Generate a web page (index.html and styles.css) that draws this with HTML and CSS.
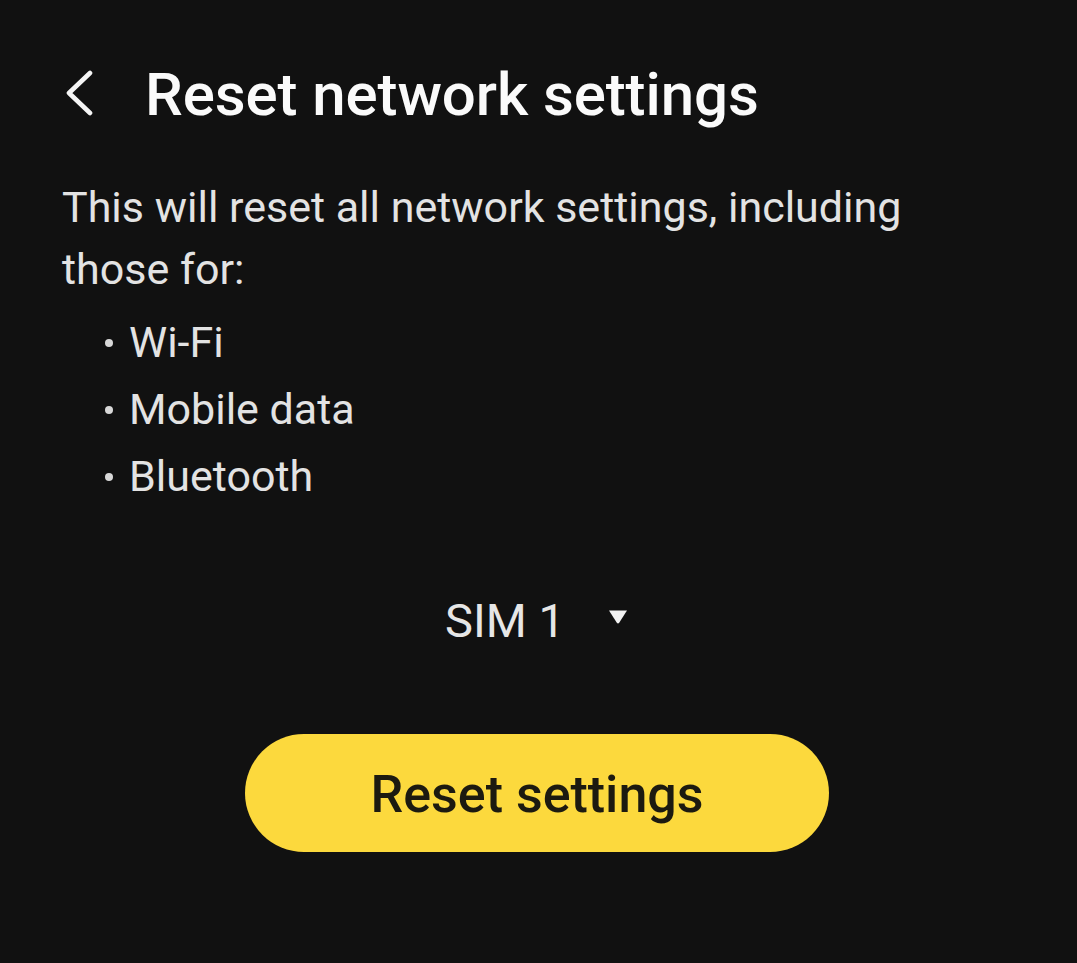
FILE: index.html
```html
<!DOCTYPE html>
<html lang="en">
<head>
<meta charset="utf-8">
<title>Reset network settings</title>
<link rel="stylesheet" href="styles.css">
</head>
<body>
<div class="screen">
  <header class="appbar">
    <button class="back" aria-label="Back">
      <svg width="30" height="46" viewBox="0 0 30 46"><path d="M26 3 L5 23 L26 43" fill="none" stroke="#f5f5f5" stroke-width="4.6" stroke-linecap="round" stroke-linejoin="round"/></svg>
    </button>
    <h1 class="title">Reset network settings</h1>
  </header>
  <section class="content">
    <p class="desc">This will reset all network settings, including those for:</p>
    <ul class="list">
      <li>Wi-Fi</li>
      <li>Mobile data</li>
      <li>Bluetooth</li>
    </ul>
    <div class="sim">
      <span class="sim-label">SIM 1</span>
      <svg class="caret" width="20" height="16" viewBox="0 0 20 16"><path d="M1 1.5 H19 L11.2 13.8 Q10 15.3 8.8 13.8 Z" fill="#f2f2f2"/></svg>
    </div>
    <div class="actions">
      <button class="reset">Reset settings</button>
    </div>
  </section>
</div>
</body>
</html>
```

FILE: styles.css
```css
* { box-sizing: border-box; }
html, body {
  margin: 0;
  padding: 0;
  background: #111111;
}
body {
  font-family: Roboto, "Noto Sans", "Liberation Sans", sans-serif;
  color: #e3e3e3;
  width: 1077px;
  height: 963px;
  overflow: hidden;
}
.screen {
  padding: 0 62px;
}
.appbar {
  display: flex;
  align-items: center;
  padding-top: 60px;
}
.back {
  background: none;
  border: none;
  padding: 0;
  margin: -5px 0 0 2px;
  width: 30px;
  height: 46px;
  display: flex;
}
.title {
  margin: 0 0 0 51px;
  font-size: 60px;
  font-weight: 500;
  color: #fafafa;
  line-height: 70px;
  letter-spacing: -0.1px;
}
.content {
  margin-top: 46px;
}
.desc {
  margin: 0;
  font-size: 43px;
  line-height: 62px;
  color: #e3e3e3;
  width: 900px;
}
.list {
  list-style: none;
  margin: 9px 0 0 0;
  padding: 0 0 0 43px;
}
.list li {
  font-size: 43px;
  line-height: 67px;
  color: #e3e3e3;
  display: flex;
  align-items: center;
}
.list li::before {
  content: "";
  width: 8px;
  height: 8px;
  border-radius: 50%;
  background: #d8d8d8;
  margin-right: 16px;
}
.sim {
  display: flex;
  justify-content: center;
  align-items: center;
  gap: 43px;
  margin-top: 83px;
  margin-left: -4px;
}
.sim-label {
  font-size: 47px;
  line-height: 56px;
  color: #e6e6e6;
}
.caret { margin-top: -8px; }
.actions {
  display: flex;
  justify-content: center;
  margin-top: 85px;
  margin-left: -3px;
}
.reset {
  width: 584px;
  height: 118px;
  border: none;
  border-radius: 59px;
  background: #fcd93d;
  color: #1c1a10;
  font-family: Roboto, "Noto Sans", "Liberation Sans", sans-serif;
  font-size: 52px;
  font-weight: 500;
  line-height: 1;
  padding: 4px 0 0 0;
}
```
